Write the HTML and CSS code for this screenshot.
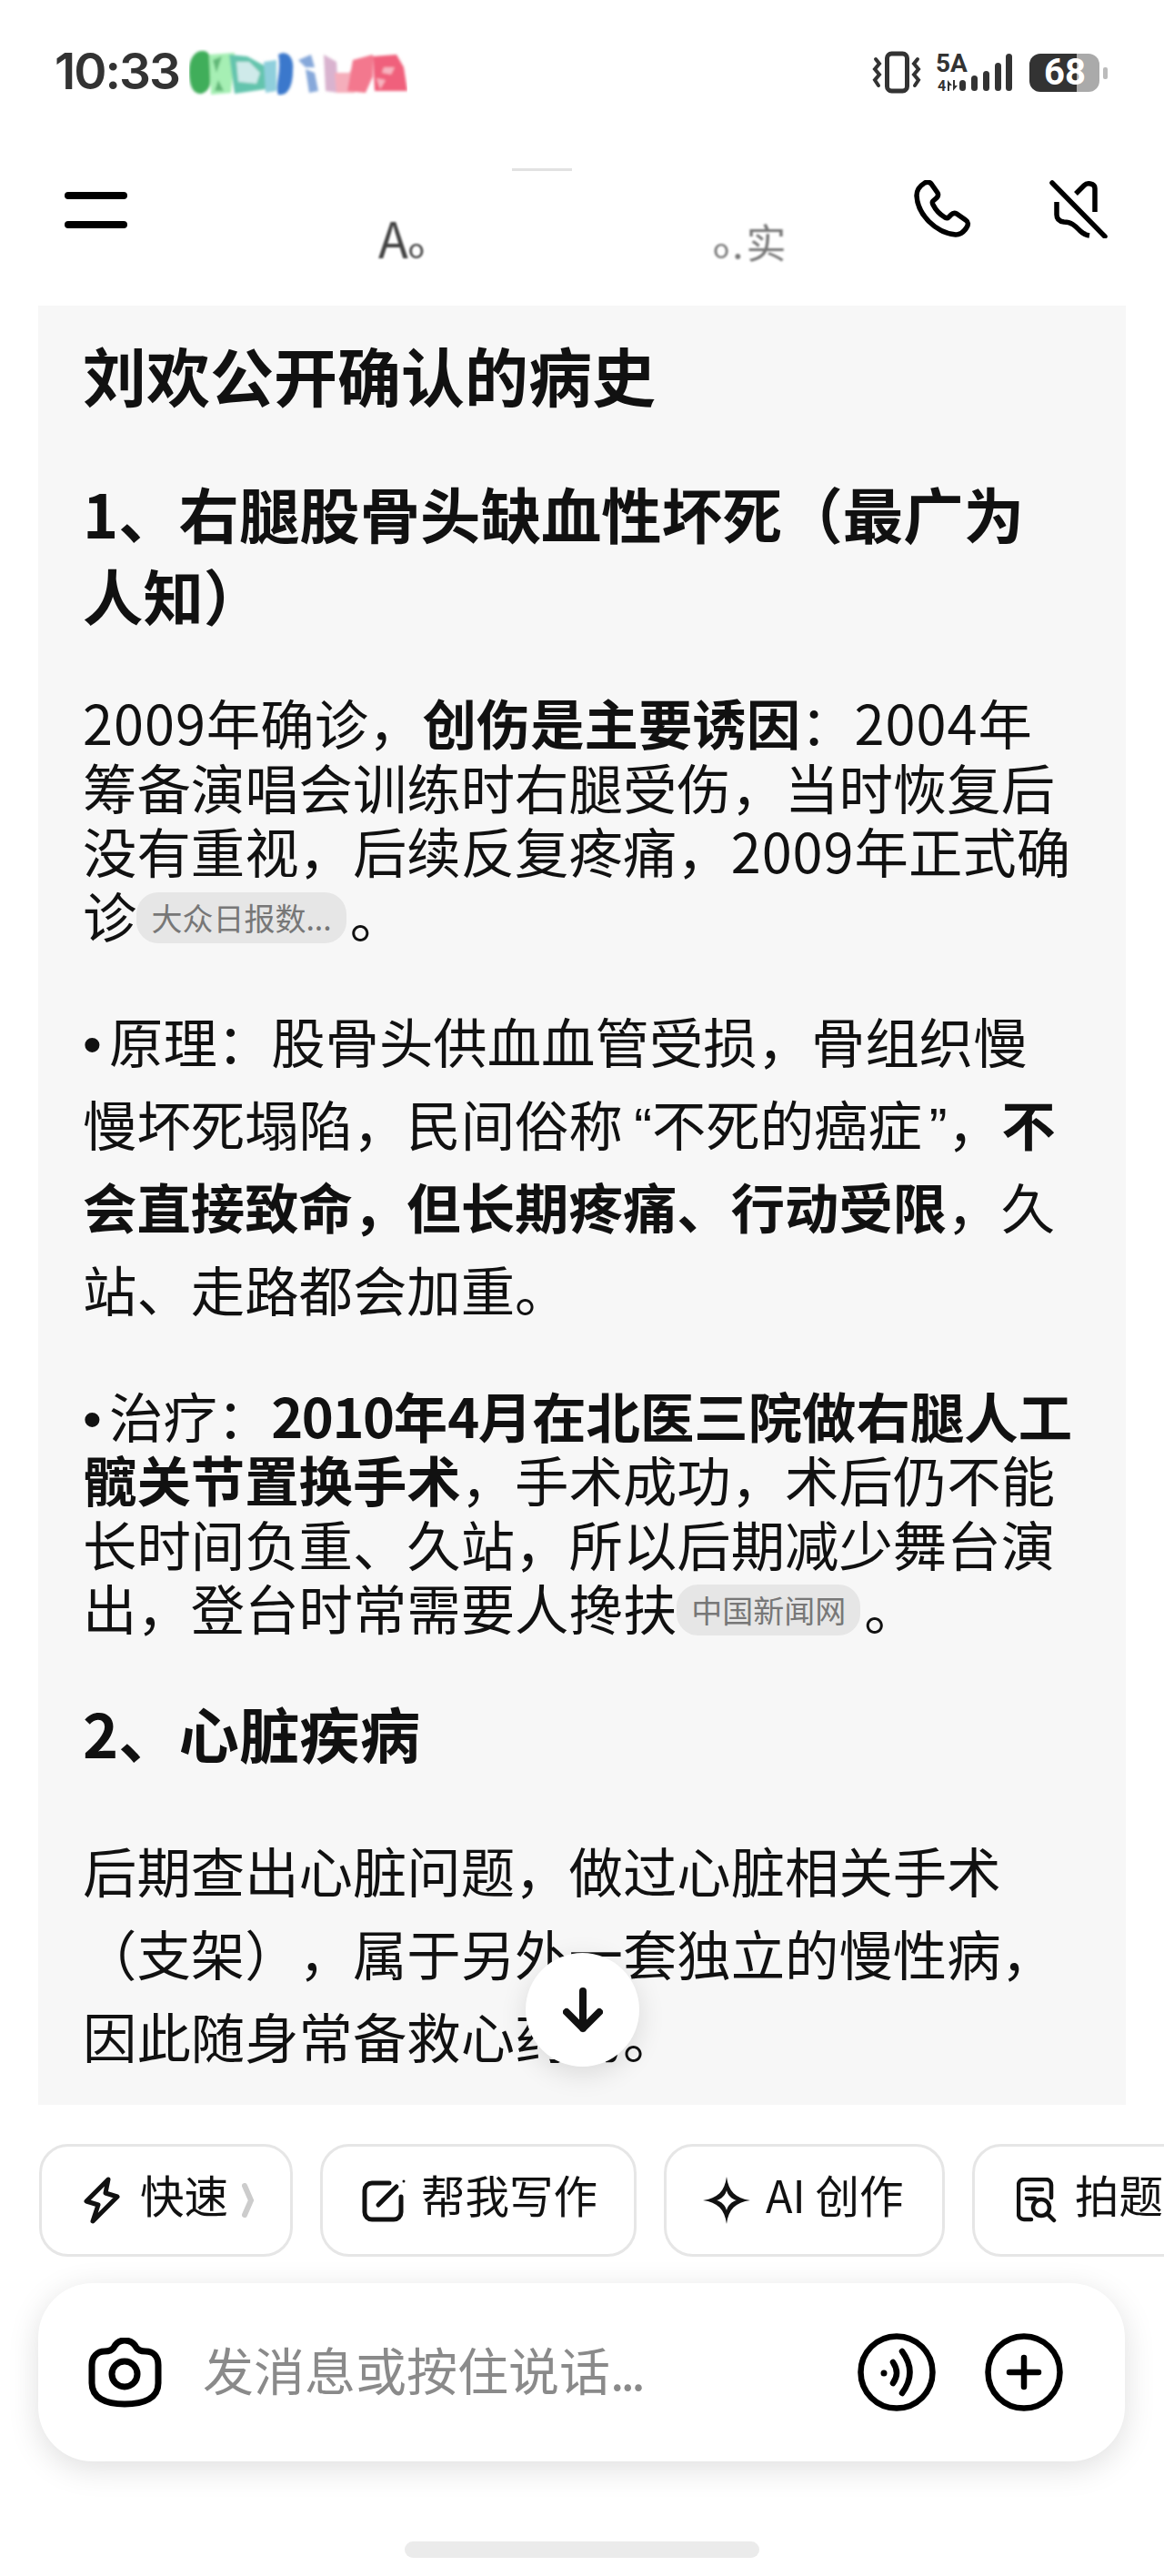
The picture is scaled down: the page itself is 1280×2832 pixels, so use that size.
FILE: index.html
```html
<!DOCTYPE html>
<html lang="zh-CN">
<head>
    <meta charset="UTF-8">
    <meta name="viewport" content="width=device-width, initial-scale=1.0">
    <title>刘欢公开确认的病史</title>
    <link rel="stylesheet" href="styles.css">
</head>
<body>
<div class="page">

    <!-- 状态栏 -->
    <div class="status">
        <span class="time">10:33</span>
        <svg class="smear" width="240" height="52" viewBox="0 0 240 52">
            <defs><filter id="soft"><feGaussianBlur stdDeviation="1.4"/></filter></defs>
            <g filter="url(#soft)">
                <path d="M0 24C0 8 8 1 16 2C24 3 26 14 24 24C23 34 26 44 14 49C4 50 0 40 0 24Z" fill="#3fae5a"/>
                <path d="M22 6L50 4L46 48L24 50Z" fill="#a6efb4"/>
                <path d="M26 12L36 8L30 26ZM32 34L38 46L28 46Z" fill="#62b878"/>
                <path d="M44 6L64 8L86 20L84 44L50 49Z" fill="#63c4ad"/>
                <path d="M52 14L66 14L78 26L74 38L54 36Z" fill="#cfeaea"/>
                <path d="M82 14L96 12L96 46L84 48Z" fill="#8fcfdc"/>
                <path d="M98 6C108 0 116 10 114 24C114 38 110 52 98 50C94 40 102 24 98 6Z" fill="#3a78cc"/>
                <path d="M120 12L134 6L138 20L128 20ZM128 22L138 26L142 46L132 48Z" fill="#86a8da"/>
                <path d="M148 6L162 14L164 48L150 46Z" fill="#d9b3cf"/>
                <path d="M160 26L176 26L186 12L182 48L162 48Z" fill="#f5aebb"/>
                <path d="M180 12L202 6L202 30L194 48L174 46Z" fill="#f3788e"/>
                <path d="M202 8L228 6L236 20L240 46L204 46Z" fill="#f0607c"/>
                <path d="M214 20L226 20L222 28L212 26ZM206 32L216 34L210 44Z" fill="#f7b4c0"/>
            </g>
        </svg>
        <div class="status-right">
            <svg class="vibrate" width="56" height="49" viewBox="0 0 56 49">
                <rect x="17.5" y="4" width="22" height="41" rx="5" fill="none" stroke="#333" stroke-width="5"/>
                <path d="M5 10L9 15L4 21L9 27L4 33L8 39M51 10L47 15L52 21L47 27L52 33L48 39" fill="none" stroke="#333" stroke-width="4" stroke-linecap="round"/>
            </svg>
            <svg class="net" width="88" height="46" viewBox="0 0 88 46">
                <text class="net-big" x="0" y="21">5A</text>
                <text class="net-small" x="2" y="42">4</text>
                <path d="M13 30L18 36H15V42H13ZM19 30H21V36H24L19 42Z" fill="#333"/>
                <rect x="26" y="30" width="7" height="12" rx="3.5" fill="#333"/>
                <rect x="39" y="25" width="7" height="17" rx="3.5" fill="#333"/>
                <rect x="52" y="20" width="7" height="22" rx="3.5" fill="#333"/>
                <rect x="65" y="11" width="7" height="31" rx="3.5" fill="#333"/>
                <rect x="77" y="1" width="7" height="41" rx="3.5" fill="#333"/>
            </svg>
            <div class="battery">
                <div class="battery-body"><span class="battery-num">68</span></div>
                <div class="battery-cap"></div>
            </div>
        </div>
    </div>

    <!-- 顶部导航 -->
    <div class="nav">
        <div class="menu"><i></i><i></i></div>
        <div class="nav-title">
            <span class="smudge smudge-a">A<small>o</small></span>
            <span class="smudge-line"></span>
            <span class="smudge smudge-b"><small>o</small>.实</span>
        </div>
        <div class="nav-actions">
            <svg width="64" height="64" viewBox="0 0 64 64" fill="none" stroke="#000" stroke-width="5.5" stroke-linejoin="round">
                <path d="M12 3C14 2 17 2 19 4L26 14C27 16 26.5 18 25 19.5L21 23C20 24 20 25 21 27C24 33 29 38 34 41C36 42 37 42 38 41L41 38C43 36 45 36 47 37L57 44C60 46 60 49 58 52C55 57 51 60 46 60C24 58 4 38 3 17C3 11 7 6 12 3Z"/>
            </svg>
            <svg width="64" height="64" viewBox="0 0 64 64" fill="none" stroke="#000" stroke-width="5.5" stroke-linecap="round">
                <path d="M3 3L61 62"/>
                <path d="M29 15L38 6Q41 3 45 4Q50 5 50 9V35" stroke-linecap="butt"/>
                <path d="M8 24V38Q8 45 16 46C24 46 28 50 34 56Q38 60 44 61" stroke-linecap="butt"/>
            </svg>
        </div>
    </div>

    <!-- 回答内容 -->
    <div class="answer">
        <h1>刘欢公开确认的病史</h1>
        <h2 class="first">1、右腿股骨头缺血性坏死（最广为<br>人知）</h2>
        <p class="tight p-intro"><span class="num">2009</span>年确诊，<b>创伤是主要诱因</b>：<span class="num">2004</span>年<br>筹备演唱会训练时右腿受伤，当时恢复后<br>没有重视，后续反复疼痛，<span class="num">2009</span>年正式确<br>诊<span class="source">大众日报数...</span>。</p>
        <p class="wide p-reason"><span class="dot">•</span>原理：股骨头供血血管受损，骨组织慢<br>慢坏死塌陷，民间俗称<span class="quote">“</span>不死的癌症<span class="quote quote-end">”</span>，<b>不<br>会直接致命，但长期疼痛、行动受限</b>，久<br>站、走路都会加重。</p>
        <p class="tight p-cure"><span class="dot">•</span>治疗：<b><span class="num-bold">2010</span>年<span class="num-bold">4</span>月在北医三院做右腿人工<br>髋关节置换手术</b>，手术成功，术后仍不能<br>长时间负重、久站，所以后期减少舞台演<br>出，登台时常需要人搀扶<span class="source">中国新闻网</span>。</p>
        <h2 class="second">2、心脏疾病</h2>
        <p class="wide p-heart">后期查出心脏问题，做过心脏相关手术<br>（支架），属于另外一套独立的慢性病，<br>因此随身常备救心药物。</p>
        <div class="to-bottom">
            <svg width="44" height="50" viewBox="0 0 44 50" fill="none" stroke="#111" stroke-width="8" stroke-linecap="round" stroke-linejoin="round">
                <path d="M22 4V45M4 27L22 45L40 27"/>
            </svg>
        </div>
    </div>

    <!-- 快捷入口 -->
    <div class="chips">
        <div class="chip chip-fast">
            <svg width="40" height="52" viewBox="0 0 40 52" fill="none" stroke="#111" stroke-width="5" stroke-linejoin="round">
                <path d="M27 3L3 27L16 31L10 49L37 22L24 18Z"/>
            </svg>
            <span>快速</span>
            <svg class="chevron" width="14" height="38" viewBox="0 0 14 38" fill="none" stroke="#ccc" stroke-width="6" stroke-linecap="round">
                <path d="M3 3L10 19L3 35"/>
            </svg>
        </div>
        <div class="chip chip-write">
            <svg width="50" height="48" viewBox="0 0 50 48" fill="none" stroke="#111" stroke-width="5" stroke-linecap="round">
                <path d="M30 5H11A8 8 0 0 0 3 13V37A8 8 0 0 0 11 45H35A8 8 0 0 0 43 37V20"/>
                <path d="M18 29L38 9"/>
                <circle cx="46" cy="3" r="1.5" fill="#111" stroke="none"/>
            </svg>
            <span>帮我写作</span>
        </div>
        <div class="chip chip-ai">
            <svg width="52" height="52" viewBox="0 0 52 52">
                <path d="M26 0C28 16 36 24 52 26C36 28 28 36 26 52C24 36 16 28 0 26C16 24 24 16 26 0Z" fill="#111"/>
                <path d="M26 15C27 20 32 25 37 26C32 27 27 32 26 37C25 32 20 27 15 26C20 25 25 20 26 15Z" fill="#fff"/>
            </svg>
            <span>AI 创作</span>
        </div>
        <div class="chip chip-photo">
            <svg width="44" height="50" viewBox="0 0 44 50" fill="none" stroke="#111" stroke-width="4.5" stroke-linecap="round">
                <path d="M38 22V8A6 6 0 0 0 32 2H8A6 6 0 0 0 2 8V40A6 6 0 0 0 8 46H16"/>
                <path d="M11 13H28M11 23H20"/>
                <circle cx="27" cy="33" r="9"/>
                <path d="M34 40L41 47"/>
            </svg>
            <span class="chip-clipped">拍题</span>
        </div>
    </div>

    <!-- 输入框 -->
    <div class="input-bar">
        <svg class="camera" width="81" height="77" viewBox="0 0 81 77" fill="none" stroke="#000" stroke-width="7">
            <path d="M28 11C31 5 35 3 40 3C46 3 50 5 53 11C55 14 58 15 63 15C72 15 77 21 77 30V50C77 66 62 73 40 73C19 73 4 66 4 50V30C4 21 10 15 18 15C23 15 26 14 28 11Z"/>
            <circle cx="40" cy="40" r="14"/>
        </svg>
        <span class="placeholder">发消息或按住说话<span class="dots">...</span></span>
        <svg class="voice" width="86" height="86" viewBox="0 0 86 86" fill="none" stroke="#000" stroke-width="6.5" stroke-linecap="round">
            <circle cx="43" cy="43" r="39.5"/>
            <circle cx="29" cy="44" r="3.5" fill="#000" stroke="none"/>
            <path d="M39 32Q47 44 39 55"/>
            <path d="M49 20Q66 43 49 66"/>
        </svg>
        <svg class="plus" width="86" height="86" viewBox="0 0 86 86" fill="none" stroke="#000" stroke-width="6.5" stroke-linecap="round">
            <circle cx="43" cy="43" r="39.5"/>
            <path d="M43 27V59M27 43H59"/>
        </svg>
    </div>

    <div class="home-bar"></div>
</div>
</body>
</html>
```

FILE: styles.css
```css
* {
    box-sizing: border-box;
}
body {
    margin: 0;
    background-color: #fff;
    color: #111;
    font-family: "Noto Sans CJK SC", "Noto Sans", sans-serif;
    text-spacing-trim: space-all;
}
.page {
    width: 1280px;
    height: 2832px;
    overflow: hidden;
}

/* 状态栏 */
.status {
    height: 120px;
    padding: 34px 0 0 60px;
    display: flex;
    align-items: flex-start;
}
.time {
    margin-top: 16px;
    width: 148px;
    font-family: Inter, sans-serif;
    font-size: 55px;
    font-weight: 600;
    line-height: 56px;
    letter-spacing: -2px;
    color: #333;
}
.smear {
    margin-top: 20px;
}
.status-right {
    margin-left: auto;
    margin-right: 62px;
    display: flex;
    align-items: flex-start;
}
.vibrate {
    margin-top: 21px;
}
.net {
    margin: 24px 0 0 15px;
}
.net-big {
    font-family: Roboto, sans-serif;
    font-size: 28px;
    font-weight: 700;
    fill: #333;
}
.net-small {
    font-family: Roboto, sans-serif;
    font-size: 16px;
    font-weight: 700;
    fill: #333;
}
.battery {
    margin: 25px 0 0 15px;
    display: flex;
    align-items: center;
    gap: 4px;
}
.battery-body {
    width: 77px;
    height: 42px;
    border-radius: 12px;
    background: linear-gradient(to right, #333 52px, #aaa 52px);
    text-align: right;
    padding-right: 15px;
}
.battery-num {
    font-family: Roboto, sans-serif;
    font-size: 40px;
    font-weight: 700;
    line-height: 42px;
    color: #fff;
}
.battery-cap {
    width: 5px;
    height: 13px;
    border-radius: 2px;
    background-color: #bbb;
}

/* 导航 */
.nav {
    height: 216px;
    padding: 78px 62px 0 71px;
    display: flex;
    align-items: flex-start;
}
.menu {
    width: 69px;
    margin-top: 13px;
}
.menu i {
    display: block;
    height: 8px;
    margin-bottom: 24px;
    border-radius: 4px;
    background-color: #000;
}
.nav-title {
    flex: 1;
    display: flex;
    color: #777;
}
.smudge {
    filter: blur(0.8px);
    font-size: 54px;
    line-height: 50px;
    margin-top: 38px;
}
.smudge small {
    font-size: 30px;
}
.smudge-a {
    margin-left: 276px;
    width: 62px;
    color: #444;
}
.smudge-line {
    width: 66px;
    height: 3px;
    margin: -13px 0 0 85px;
    background-color: #e2e2e2;
}
.smudge-b {
    margin-left: 155px;
    margin-top: 42px;
    font-size: 44px;
    color: #777;
    letter-spacing: 3px;
}
.nav-actions {
    display: flex;
    gap: 85px;
}

/* 回答卡片 */
.answer {
    position: relative;
    height: 1978px;
    margin: 0 42px;
    padding: 31px 0 0 49px;
    background-color: #f7f7f7;
    white-space: nowrap;
}
h1 {
    margin: 0;
    font-size: 70px;
    font-weight: 700;
    line-height: 90px;
}
h2 {
    margin: 0;
    font-size: 66.4px;
    font-weight: 700;
    line-height: 90px;
}
h2.first {
    margin-top: 61px;
}
h2.second {
    margin-top: 57px;
}
p {
    margin: 0;
    font-size: 59.4px;
}
p b {
    font-weight: 700;
}
.tight {
    line-height: 70.5px;
}
.wide {
    line-height: 91px;
}
.p-intro {
    margin-top: 60px;
}
.p-reason {
    margin-top: 57.5px;
}
.p-cure {
    margin-top: 58px;
}
.p-heart {
    margin-top: 61.5px;
}
.num {
    letter-spacing: 1px;
}
.num-bold {
    letter-spacing: -1.4px;
}
.dot {
    display: inline-block;
    width: 29px;
    font-family: "Liberation Sans", sans-serif;
    line-height: 1;
}
.quote {
    display: inline-block;
    width: 32px;
    font-family: "Liberation Sans", sans-serif;
    line-height: 1;
    text-align: right;
}
.quote-end {
    width: 28px;
    text-align: left;
    padding-left: 8px;
}
.source {
    display: inline-block;
    height: 56px;
    margin: 0 4px 0 0;
    padding: 0 16px;
    border-radius: 24px;
    background-color: #e6e6e6;
    color: #777;
    font-size: 34px;
    line-height: 56px;
    vertical-align: 8px;
}
.to-bottom {
    position: absolute;
    left: 536px;
    bottom: 42px;
    width: 125px;
    height: 125px;
    border-radius: 50%;
    background-color: #fff;
    box-shadow: 0 8px 30px rgba(0, 0, 0, 0.12);
    display: flex;
    align-items: center;
    justify-content: center;
}

/* 快捷入口 */
.chips {
    display: flex;
    gap: 30px;
    margin-top: 43px;
    padding-left: 43px;
    overflow: hidden;
}
.chip {
    flex: none;
    height: 124px;
    border: 3px solid #e6e6e6;
    border-radius: 32px;
    display: flex;
    align-items: center;
    font-size: 48.5px;
    line-height: 60px;
    color: #111;
}
.chip span {
    margin-top: -15px;
}
.chip-fast {
    width: 279px;
    padding-left: 46px;
    gap: 22px;
}
.chip-fast .chevron {
    margin-left: -7px;
}
.chip-write {
    width: 348px;
    padding-left: 43px;
    gap: 15px;
}
.chip-ai {
    width: 309px;
    padding-left: 40px;
    gap: 17px;
}
.chip-photo {
    width: 320px;
    padding-left: 46px;
    gap: 20px;
}

/* 输入框 */
.input-bar {
    height: 196px;
    margin: 29px 43px 0 42px;
    padding: 0 68px 0 55px;
    border-radius: 60px;
    background-color: #fff;
    box-shadow: 0 8px 34px rgba(0, 0, 0, 0.13);
    display: flex;
    align-items: center;
}
.placeholder {
    flex: 1;
    margin: -10px 0 0 45px;
    font-size: 56px;
    color: #8a8a8a;
}
.dots {
    letter-spacing: -4px;
}
.plus {
    margin-left: 54px;
}
.home-bar {
    width: 390px;
    height: 18px;
    margin: 88px 0 0 445px;
    border-radius: 9px;
    background-color: #ebebeb;
}
```
